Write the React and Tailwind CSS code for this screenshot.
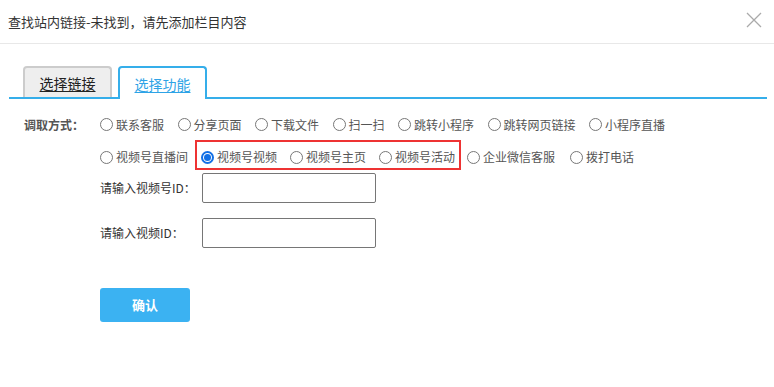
import React, { useState } from 'react';

const row1 = ['联系客服', '分享页面', '下载文件', '扫一扫', '跳转小程序', '跳转网页链接', '小程序直播'];

const Radio = ({ label, checked, onClick }) => (
    <label onClick={onClick} className="flex items-center cursor-pointer">
        <span className={`w-[13px] h-[13px] rounded-full flex items-center justify-center shrink-0 ${checked ? 'border-2 border-[#1370e6]' : 'border border-[#777]'}`}>
            {checked && <span className="w-[7px] h-[7px] rounded-full bg-[#1370e6]" />}
        </span>
        <span className="ml-[3px] text-[12px] leading-[16px] text-[#555] whitespace-nowrap">{label}</span>
    </label>
);

const Field = ({ label }) => (
    <div className="flex items-center">
        <span className="w-[102px] text-[12px] text-[#333] whitespace-nowrap">{label}</span>
        <input type="text" className="w-[174px] h-[30px] border border-[#767676] rounded-[2px] outline-none px-2 text-[12px]" />
    </div>
);

export default function App() {
    const [tab, setTab] = useState('func');
    const [mode, setMode] = useState('视频号视频');

    return (
        <div className="w-[774px] h-[387px] bg-white font-['Noto_Sans_CJK_SC','Noto_Sans',sans-serif] overflow-hidden">
            {/* header */}
            <div className="h-[44px] border-b border-[#e8e8e8] flex items-center justify-between pl-[8px] pr-[12px]">
                <span className="text-[13px] text-[#333]">查找站内链接-未找到，请先添加栏目内容</span>
                <svg width="16" height="16" viewBox="0 0 16 16" className="mt-[-4px]">
                    <path d="M1 1 L15 15 M15 1 L1 15" stroke="#aaa" strokeWidth="1.3" fill="none" />
                </svg>
            </div>

            {/* tabs */}
            <div className="pt-[22px] ml-[9px] mr-[7px]">
                <div className="flex items-end gap-[6px] pl-[14px] border-b-2 border-[#35aeea]">
                    <button onClick={() => setTab('link')} className={`w-[89px] rounded-t-[4px] text-[14px] leading-[20px] underline underline-offset-2 ${tab === 'link' ? 'bg-white border-2 border-b-0 border-[#35aeea] text-[#2ea3e6] mb-[-2px] h-[33px]' : 'bg-[#eeeeee] border-2 border-b-0 border-[#cccccc] text-[#222] h-[31px]'}`}>
                        选择链接
                    </button>
                    <button onClick={() => setTab('func')} className={`w-[89px] rounded-t-[4px] text-[14px] leading-[20px] underline underline-offset-2 ${tab === 'func' ? 'bg-white border-2 border-b-0 border-[#35aeea] text-[#2ea3e6] mb-[-2px] h-[33px]' : 'bg-[#eeeeee] border-2 border-b-0 border-[#cccccc] text-[#222] h-[31px]'}`}>
                        选择功能
                    </button>
                </div>
            </div>

            {/* options */}
            <div className="pt-[10px] pl-[24px]">
                <div className="flex items-center h-[31px]">
                    <span className="w-[76px] text-[12px] font-bold text-[#555]">调取方式：</span>
                    <div className="flex items-center gap-[13.5px]">
                        {row1.map(l => <Radio key={l} label={l} checked={mode === l} onClick={() => setMode(l)} />)}
                    </div>
                </div>
                <div className="flex items-center h-[30px] pl-[76px]">
                    <div className="mt-[4px] mr-[7px]">
                        <Radio label="视频号直播间" checked={mode === '视频号直播间'} onClick={() => setMode('视频号直播间')} />
                    </div>
                    <div className="h-[30px] border-2 border-[#ee3333] flex items-center gap-[13px] pl-[4px] pr-[4px] pt-[4px]">
                        {['视频号视频', '视频号主页', '视频号活动'].map(l => <Radio key={l} label={l} checked={mode === l} onClick={() => setMode(l)} />)}
                    </div>
                    <div className="mt-[4px] ml-[6px] flex items-center gap-[15px]">
                        <Radio label="企业微信客服" checked={mode === '企业微信客服'} onClick={() => setMode('企业微信客服')} />
                        <Radio label="拨打电话" checked={mode === '拨打电话'} onClick={() => setMode('拨打电话')} />
                    </div>
                </div>

                <div className="pl-[76px] pt-[3px] flex flex-col gap-[15px]">
                    <Field label="请输入视频号ID：" />
                    <Field label="请输入视频ID：" />
                    <button className="mt-[25px] w-[90px] h-[34px] rounded-[3px] bg-[#3bb2f2] text-white text-[13px] font-bold">确认</button>
                </div>
            </div>
        </div>
    );
}
